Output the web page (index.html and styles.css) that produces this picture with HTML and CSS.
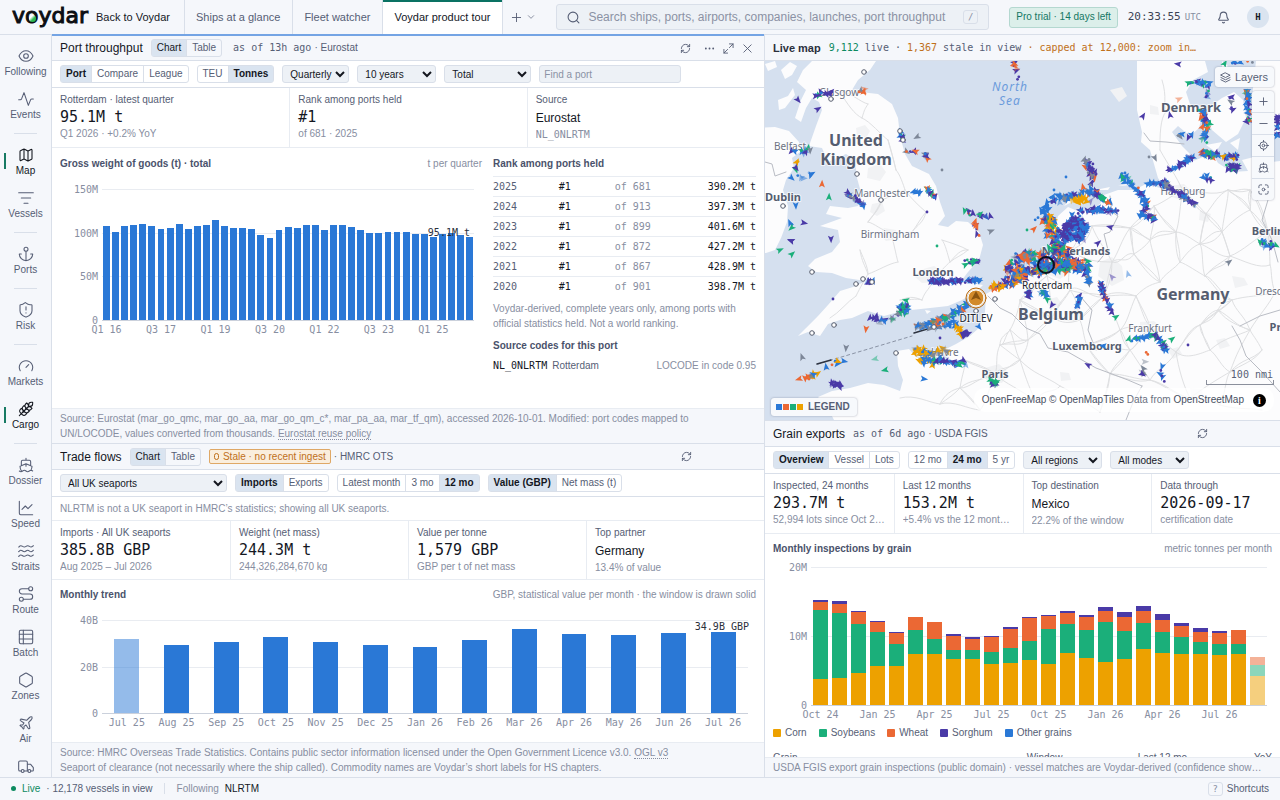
FILE: index.html
```html
<!DOCTYPE html>
<html lang="en">
<head>
<meta charset="utf-8">
<meta name="viewport" content="width=device-width, initial-scale=1">
<title>Voydar</title>
<link rel="stylesheet" href="styles.css">
</head>
<body>
<svg class="defs" aria-hidden="true">
  <symbol id="i-refresh" viewBox="0 0 24 24"><path d="M3 12a9 9 0 0 1 9-9 9.75 9.75 0 0 1 6.74 2.74L21 8M21 3v5h-5M21 12a9 9 0 0 1-9 9 9.75 9.75 0 0 1-6.74-2.74L3 16M3 21v-5h5"/></symbol>
  <symbol id="i-ship" viewBox="0 0 24 24"><path d="M12 10.2V14M12 2v3M19 13V7a2 2 0 0 0-2-2H7a2 2 0 0 0-2 2v6M19.4 20A11.6 11.6 0 0 0 21 14l-8.2-3.6a2 2 0 0 0-1.6 0L3 14a11.6 11.6 0 0 0 2.8 7.8M2 21c.6.5 1.2 1 2.5 1 2.5 0 2.5-2 5-2 1.300 0 1.900.5 2.500 1s1.200 1 2.500 1c2.500 0 2.500-2 5-2 1.300 0 1.900.5 2.500 1"/></symbol>
</svg>
<div class="app">
  <header class="topbar">
    <a class="logo" href="#">voydar<span class="logo-dot"></span></a>
    <a class="back" href="#">Back to Voydar</a>
    <nav class="tabs">
      <a class="tab" href="#">Ships at a glance</a>
      <a class="tab" href="#">Fleet watcher</a>
      <a class="tab tab-on" href="#">Voydar product tour</a>
    </nav>
    <button class="newtab" aria-label="New tab"><svg class="ic" viewBox="0 0 24 24"><path d="M3 12h18M12 3v18"/></svg><svg class="ic ic-sm" viewBox="0 0 24 24"><path d="m4 8 8 8 8-8"/></svg></button>
    <label class="search">
      <svg class="ic" viewBox="0 0 24 24"><circle cx="11" cy="11" r="9"/><path d="m22 22-4.500-4.500"/></svg>
      <input type="text" aria-label="Search" placeholder="Search ships, ports, airports, companies, launches, port throughput">
      <kbd>/</kbd>
    </label>
    <a class="trial" href="#">Pro trial · 14 days left</a>
    <span class="clock">20:33:55<small>UTC</small></span>
    <button class="bell" aria-label="Notifications"><svg class="ic" viewBox="0 0 24 24"><path d="M10.300 21a2 2 0 0 0 3.400 0M3.300 15.300A1 1 0 0 0 4 17h16a1 1 0 0 0 .7-1.700C19.400 14 18 12.500 18 8A6 6 0 0 0 6 8c0 4.500-1.400 6-2.700 7.300z"/></svg></button>
    <button class="avatar">H</button>
  </header>

  <nav class="side">
    <a href="#"><svg viewBox="0 0 24 24"><path d="M1.500 12C4 6.500 8 4 12 4s8 2.500 10.500 8C20 17.500 16 20 12 20S4 17.500 1.500 12z"/><circle cx="12" cy="12" r="3.500"/></svg>Following</a>
    <a href="#"><svg viewBox="0 0 24 24"><path d="M1 13h2.500c1 0 1.500-.5 2-1.500L9 2.500l6.500 19L19 13c.4-1 1-1 2-1h2"/></svg>Events</a>
    <hr>
    <a class="on" href="#"><svg viewBox="0 0 24 24"><path d="M14.100 5.600a2 2 0 0 0 1.800 0l3.700-1.900A1 1 0 0 1 21 4.600v12.800a1 1 0 0 1-.6.900l-4.500 2.300a2 2 0 0 1-1.800 0l-4.200-2.200a2 2 0 0 0-1.800 0l-3.700 1.900A1 1 0 0 1 3 19.400V6.600a1 1 0 0 1 .6-.9l4.500-2.300a2 2 0 0 1 1.800 0zM15 5.800v15M9 3.200v15"/></svg>Map</a>
    <a href="#"><svg viewBox="0 0 24 24"><path d="M1 4h22M5 12h14M9 20h6"/></svg>Vessels</a>
    <hr>
    <a href="#"><svg viewBox="0 0 24 24"><path d="M12 22V8M5 12H2a10 10 0 0 0 20 0h-3"/><circle cx="12" cy="5" r="3"/></svg>Ports</a>
    <hr>
    <a href="#"><svg viewBox="0 0 24 24"><path d="M21 13c0 5-3.500 7.500-8.700 9.400a1 1 0 0 1-.7 0C6.500 20.500 3 18 3 13V5a1 1 0 0 1 1-1c2 0 4.500-1.200 6.200-2.700a1.200 1.200 0 0 1 1.500 0C13.500 2.800 16 4 18 4h2a1 1 0 0 1 1 1zM12 7v5M12 16v.5"/></svg>Risk</a>
    <hr>
    <a href="#"><svg viewBox="0 0 24 24"><path d="m12 14 4-4M3.300 19a10 10 0 1 1 17.400 0"/></svg>Markets</a>
    <a class="on" href="#"><svg viewBox="0 0 24 24"><path d="M2 22 16 8M3.500 12.500 5 11l1.500 1.500a3.500 3.500 0 0 1 0 5L5 19l-1.500-1.500a3.500 3.500 0 0 1 0-5zM7.500 8.500 9 7l1.500 1.500a3.500 3.500 0 0 1 0 5L9 15l-1.500-1.500a3.500 3.500 0 0 1 0-5zM11.500 4.500 13 3l1.500 1.500a3.500 3.500 0 0 1 0 5L13 11l-1.500-1.500a3.500 3.500 0 0 1 0-5zM20 2h2v2a4 4 0 0 1-4 4h-2V6a4 4 0 0 1 4-4zM11.500 17.500 13 19l-1.500 1.500a3.500 3.500 0 0 1-5 0L5 19l1.500-1.500a3.500 3.500 0 0 1 5 0zM15.500 13.500 17 15l-1.500 1.500a3.500 3.500 0 0 1-5 0L9 15l1.500-1.500a3.500 3.500 0 0 1 5 0zM19.500 9.500 21 11l-1.500 1.500a3.500 3.500 0 0 1-5 0L13 11l1.500-1.500a3.500 3.500 0 0 1 5 0z"/></svg>Cargo</a>
    <hr>
    <a href="#"><svg><use href="#i-ship"/></svg>Dossier</a>
    <a href="#"><svg viewBox="0 0 24 24"><path d="M2 2v18a2 2 0 0 0 2 2h18M6 14l5-5 4 4 6-6"/></svg>Speed</a>
    <a href="#"><svg viewBox="0 0 24 24"><path d="M1 6c.6.500 1.200-2 3-2 3 0 3 2 5.500 2s2.500-2 5-2 3 2 5 2 2.500-1.500 3.500-2M1 13c.6.500 1.200-2 3-2 3 0 3 2 5.500 2s2.500-2 5-2 3 2 5 2 2.500-1.500 3.500-2M1 20c.6.500 1.200-2 3-2 3 0 3 2 5.500 2s2.500-2 5-2 3 2 5 2 2.500-1.500 3.500-2"/></svg>Straits</a>
    <a href="#"><svg viewBox="0 0 24 24"><circle cx="5" cy="20" r="3"/><circle cx="19" cy="4" r="3"/><path d="M8 20h10a4 4 0 0 0 0-8H6a4 4 0 0 1 0-8h10"/></svg>Route</a>
    <a href="#"><svg viewBox="0 0 24 24"><rect x="2" y="2" width="20" height="20" rx="2"/><path d="M2 8h20M8 2v20M2 15h20"/></svg>Batch</a>
    <a href="#"><svg viewBox="0 0 24 24"><path d="M21.500 16V8a2 2 0 0 0-1-1.700l-7.500-4.300a2 2 0 0 0-2 0L3.500 6.300a2 2 0 0 0-1 1.700v8a2 2 0 0 0 1 1.700L11 22a2 2 0 0 0 2 0l7.500-4.300a2 2 0 0 0 1-1.700z"/></svg>Zones</a>
    <a href="#"><svg viewBox="0 0 24 24"><path d="M17.800 19.200 16 11l3.500-3.500C21 6 21.500 4 21 3c-1-.5-3 0-4.500 1.500L13 8 4.800 6.200c-.5-.1-.9.100-1.100.5l-.3.500c-.2.500-.1 1 .3 1.300L9 12l-2 3H4l-1 1 3 2 2 3 1-1v-3l3-2 3.500 5.300c.3.400.8.500 1.300.3l.5-.2c.4-.3.600-.7.500-1.200z"/></svg>Air</a>
    <a class="last" href="#" aria-label="Road"><svg viewBox="0 0 24 24"><path d="M14 18V5a2 2 0 0 0-2-2H3a2 2 0 0 0-2 2v11a2 2 0 0 0 2 2h2M15 18H9M19 18h3a1 1 0 0 0 1-1v-4l-4-5h-5"/><circle cx="17" cy="18" r="2.200"/><circle cx="7" cy="18" r="2.200"/></svg></a>
  </nav>

  <main class="left">
    <section class="panel port">
      <header class="phead">
        <h2>Port throughput</h2>
        <div class="seg"><button class="sel">Chart</button><button>Table</button></div>
        <span class="asof">as of 13h ago</span><span class="src">· Eurostat</span>
        <div class="tools">
          <button aria-label="Refresh"><svg class="ic"><use href="#i-refresh"/></svg></button>
          <button class="more" aria-label="More"><svg class="ic" viewBox="0 0 24 24"><path stroke-width="4" d="M4 12h.1M12 12h.1M20 12h.1"/></svg></button>
          <button aria-label="Expand"><svg class="ic" viewBox="0 0 24 24"><path d="M14 2h8v8M22 2l-8 8M10 22H2v-8M2 22l8-8"/></svg></button>
          <button aria-label="Close"><svg class="ic" viewBox="0 0 24 24"><path d="m4 4 16 16M20 4 4 20"/></svg></button>
        </div>
      </header>
      <div class="bar">
        <div class="seg"><button class="sel b">Port</button><button>Compare</button><button>League</button></div>
        <div class="seg"><button>TEU</button><button class="sel b">Tonnes</button></div>
        <select class="w-s" aria-label="Period"><option>Quarterly</option></select>
        <select class="w-m" aria-label="Range"><option>10 years</option></select>
        <select class="w-l" aria-label="Cargo"><option>Total</option></select>
        <input class="find" type="text" aria-label="Find a port" placeholder="Find a port">
      </div>
      <div class="kpis">
        <div><span>Rotterdam · latest quarter</span><b>95.1M t</b><i>Q1 2026 · +0.2% YoY</i></div>
        <div><span>Rank among ports held</span><b>#1</b><i>of 681 · 2025</i></div>
        <div><span>Source</span><b class="word">Eurostat</b><i class="mono">NL_0NLRTM</i></div>
      </div>
      <div class="body split">
        <div>
          <div class="shead"><h3>Gross weight of goods (t) · total</h3><span>t per quarter</span></div>
          <div class="chart c-port">
            <div class="yax"><span>150M</span><span>100M</span><span>50M</span><span>0</span></div>
            <div class="plot" id="port-bars"><output class="tip">95.1M t</output></div>
            <div class="xax" id="port-x"></div>
          </div>
        </div>
        <div>
          <div class="shead"><h3>Rank among ports held</h3></div>
          <table class="rank">
            <tr><td>2025</td><td>#1</td><td>of 681</td><td>390.2M t</td></tr>
            <tr><td>2024</td><td>#1</td><td>of 913</td><td>397.3M t</td></tr>
            <tr><td>2023</td><td>#1</td><td>of 899</td><td>401.6M t</td></tr>
            <tr><td>2022</td><td>#1</td><td>of 872</td><td>427.2M t</td></tr>
            <tr><td>2021</td><td>#1</td><td>of 867</td><td>428.9M t</td></tr>
            <tr><td>2020</td><td>#1</td><td>of 901</td><td>398.7M t</td></tr>
          </table>
          <p class="fine">Voydar-derived, complete years only, among ports with official statistics held. Not a world ranking.</p>
          <h3 class="codes-h">Source codes for this port</h3>
          <div class="codes"><span class="mono">NL_0NLRTM</span><span>Rotterdam</span><em>LOCODE in code 0.95</em></div>
        </div>
      </div>
      <footer class="pfoot">Source: Eurostat (mar_go_qmc, mar_go_aa, mar_go_qm_c*, mar_pa_aa, mar_tf_qm), accessed 2026-10-01. Modified: port codes mapped to<br>UN/LOCODE, values converted from thousands. <a href="#">Eurostat reuse policy</a></footer>
    </section>

    <section class="panel trade">
      <header class="phead">
        <h2>Trade flows</h2>
        <div class="seg"><button class="sel">Chart</button><button>Table</button></div>
        <span class="stale"><i></i>Stale · no recent ingest</span><span class="src">· HMRC OTS</span>
        <div class="tools solo"><button aria-label="Refresh"><svg class="ic"><use href="#i-refresh"/></svg></button></div>
      </header>
      <div class="bar">
        <select class="w-xl" aria-label="Seaport"><option>All UK seaports</option></select>
        <div class="seg"><button class="sel b">Imports</button><button>Exports</button></div>
        <div class="seg"><button>Latest month</button><button>3 mo</button><button class="sel b">12 mo</button></div>
        <div class="seg"><button class="sel b">Value (GBP)</button><button>Net mass (t)</button></div>
      </div>
      <p class="note">NLRTM is not a UK seaport in HMRC’s statistics; showing all UK seaports.</p>
      <div class="kpis">
        <div><span>Imports · All UK seaports</span><b>385.8B GBP</b><i>Aug 2025 – Jul 2026</i></div>
        <div><span>Weight (net mass)</span><b>244.3M t</b><i>244,326,284,670 kg</i></div>
        <div><span>Value per tonne</span><b>1,579 GBP</b><i>GBP per t of net mass</i></div>
        <div><span>Top partner</span><b class="word">Germany</b><i>13.4% of value</i></div>
      </div>
      <div class="body">
        <div class="shead"><h3>Monthly trend</h3><span>GBP, statistical value per month · the window is drawn solid</span></div>
        <div class="chart c-trade">
          <div class="yax"><span>40B</span><span>20B</span><span>0</span></div>
          <div class="plot" id="trade-bars"><output class="tip">34.9B GBP</output></div>
          <div class="xax" id="trade-x"></div>
        </div>
      </div>
      <footer class="pfoot">Source: HMRC Overseas Trade Statistics. Contains public sector information licensed under the Open Government Licence v3.0. <a href="#">OGL v3</a><br>Seaport of clearance (not necessarily where the ship called). Commodity names are Voydar’s short labels for HS chapters.</footer>
    </section>
  </main>

  <aside class="right">
    <section class="panel mapp">
      <header class="phead">
        <h2>Live map</h2>
        <p class="live"><span class="g">9,112</span> live · <span class="o">1,367</span> stale in view <span class="o">· capped at 12,000: zoom in…</span></p>
      </header>
      <div class="map">
        <svg class="chartmap" id="map" viewBox="765 61 515 359" preserveAspectRatio="xMidYMid slice" role="img" aria-label="Vessel map">
          <rect class="sea" x="465" y="-100" width="1100" height="700"/>
          <g class="land">
            <path d="M812 61 803 70 797 82 806 90 801 100 795 118 801 122 806 108 812 98 819 102 822 110 816 126 809 146 822 148 828 162 846 154 855 160 857 178 862 196 858 206 848 208 830 206 826 214 842 218 820 226 838 230 840 242 832 252 815 259 808 266 816 272 832 273 846 278 866 281 853 287 840 291 828 305 818 316 806 328 798 336 808 332 820 336 828 324 840 320 852 318 868 311 884 316 902 311 930 308 948 306 962 300 976 292 983 285 970 283 962 280 968 272 979 260 983 245 979 232 968 222 956 221 948 227 938 225 945 216 940 202 936 186 929 174 912 166 905 154 900 136 898 118 892 104 878 94 860 92 852 90 858 80 870 70 876 61Z"/>
            <path d="M700 130 775 127 789 131 799 142 800 152 792 158 794 168 786 180 783 190 788 206 787 222 781 238 775 250 766 253 700 260Z"/>
            <path d="M781 70 790 62 797 66 792 75 785 79ZM765 64 775 61 777 67 768 71ZM778 100 788 96 793 88 795 95 785 108 779 110ZM925 310 931 311 927 314Z"/>
            <path d="M1137 0V110L1142 132 1141 142 1150 150 1154 164 1158 178 1168 192 1160 188 1146 184 1134 190 1118 190 1104 195 1100 204 1090 210 1080 212 1068 207 1058 216 1052 238 1044 258 1032 268 1016 278 1000 286 986 294 985 312 980 327 970 336 956 344 944 350 948 358 932 362 916 357 909 349 897 351 898 366 903 380 900 391 884 385 868 383 850 388 832 391 818 397 828 408 834 420 830 600H1600V0Z"/>
            <path d="M1118 186 1135 182 1133 185ZM1095 190 1110 187 1108 190ZM1064 206 1070 199 1072 202ZM1078 197 1088 194 1086 197Z"/>
          </g>
          <g class="town"><path d="M856 128l9-3 5 6-4 7-9-2zM868 168l12-4 6 8-6 9-13-3zM872 204l10-2 3 9-8 5-7-4zM884 228l12 2 2 9-12 2-6-6zM920 270l14-4 12 7-6 9-18 1-7-6zM1100 262l12-5 10 9 2 14-12 6-14-10zM1170 186l14-2 8 8-8 9-15-5zM1200 210l11 4-3 8-9-2zM1262 232l18-4v18l-15 2zM1140 322l14-1 9 8-11 7-12-5zM1168 350l10-3 4 7-9 5zM985 368l14-4 10 9-7 10-16-3zM1190 388l11 1 3 8-12 4zM1050 268l14-2 6 6-10 7-11-4zM1232 276l12 2 4 7-13 3zM1045 300l12-3 5 7-11 5zM1150 105l8 2 1 8-9-1zM1110 90l12-3 5 9-8 6zM1216 340l9-2 5 8-10 3zM1060 372l9 1 2 7-10 1z"/></g>
          <path class="sea" d="M1205 61 1208 72 1193 80 1186 92 1190 104 1203 112 1199 128 1190 136 1178 126 1172 132 1182 146 1190 154 1178 166 1196 160 1212 153 1218 163 1232 172 1248 171 1242 160 1258 156 1272 162 1290 160V61ZM1071 218 1082 215 1086 222 1078 230 1070 236 1068 228ZM1143 172 1150 176 1144 180Z"/>
          <path class="land" d="M1183 104 1196 106 1200 120 1192 130 1180 122ZM1208 108 1222 98 1234 92 1243 100 1246 118 1238 134 1226 142 1212 130 1208 118ZM1206 145 1222 142 1216 152ZM1230 143 1240 138 1238 150ZM1256 61H1290V138L1268 136 1262 118 1252 98ZM1222 61 1228 66 1222 70Z"/>
          <g class="roads" id="roads"></g>
          <path class="border" d="M765 162 772 164 775 176 786 172M1144 133 1150 141 1166 142 1184 144M1110 196 1112 212 1118 216 1110 232 1104 234 1108 250 1098 262M988 296 1000 308 1012 314 1026 328 1040 334 1048 348 1068 352 1082 360 1096 368 1112 374 1128 380 1142 386M1080 296 1092 310 1088 330 1096 350M1232 326 1240 340 1246 356 1262 372 1280 392M1142 386 1134 400 1126 420M1240 326 1260 316 1280 310M1268 200 1262 220 1272 240 1278 262"/>
          <path class="track" d="M818 364 912 336"/><path class="track2" d="M817 364 831 360M914 333 934 327"/>
          <g class="lb">
            <text class="it" x="1010" y="91">North</text><text class="it" x="1010" y="105">Sea</text>
            <text x="839" y="96">Glasgow</text><text class="big" x="856" y="146">United</text><text class="big" x="856" y="165">Kingdom</text>
            <text x="790" y="150">Belfast</text><text class="mid" x="783" y="201">Dublin</text><text x="882" y="197">Manchester</text>
            <text x="890" y="238">Birmingham</text><text class="mid" x="933" y="276">London</text>
            <text class="mid2" x="1191" y="112">Denmark</text><text x="1183" y="195">Hamburg</text><text class="mid" x="1268" y="235">Berlin</text>
            <text class="mid" x="1076" y="255">Netherlands</text><text class="big" x="1193" y="300">Germany</text><text class="big" x="1051" y="320">Belgium</text>
            <text class="mid" x="1087" y="350">Luxembourg</text><text x="1150" y="332">Frankfurt</text><text x="1275" y="295">Dresden</text><text class="mid" x="1289" y="331">Prague</text>
            <text x="938" y="356">Le Havre</text><text class="mid" x="995" y="378">Paris</text>
          </g>
          <g id="vessels"></g>
          <circle class="ring" cx="1046" cy="265" r="8"/>
          <g class="target"><circle cx="976" cy="298" r="10"/><circle class="fill" cx="976" cy="298" r="8"/><path d="m976 291 5 9-5-2-5 2z"/></g>
          <g class="lb"><text class="dk" x="1047" y="289">Rotterdam</text><text class="dk" x="976" y="322">DITLEV</text></g>
        </svg>
        <div class="mapui">
          <button class="layers"><svg class="ic" viewBox="0 0 24 24"><path d="m12 2 10 5-10 5L2 7zM2 12l10 5 10-5M2 17l10 5 10-5"/></svg>Layers</button>
          <div class="ctl">
            <button aria-label="Zoom in"><svg class="ic" viewBox="0 0 24 24"><path d="M4 12h16M12 4v16"/></svg></button>
            <button aria-label="Zoom out"><svg class="ic" viewBox="0 0 24 24"><path d="M4 12h16"/></svg></button>
            <button aria-label="Locate"><svg class="ic" viewBox="0 0 24 24"><circle cx="12" cy="12" r="8"/><circle cx="12" cy="12" r="3"/><path d="M12 1v3M12 20v3M1 12h3M20 12h3"/></svg></button>
            <button aria-label="Fleet"><svg class="ic"><use href="#i-ship"/></svg></button>
            <button aria-label="Fit view"><svg class="ic" viewBox="0 0 24 24"><path d="M2 8V5a3 3 0 0 1 3-3h3M16 2h3a3 3 0 0 1 3 3v3M22 16v3a3 3 0 0 1-3 3h-3M8 22H5a3 3 0 0 1-3-3v-3"/><circle cx="12" cy="12" r="3"/></svg></button>
          </div>
          <div class="mapfoot">
            <button class="legend"><i class="c1"></i><i class="c2"></i><i class="c3"></i><i class="c4"></i>LEGEND</button>
            <div class="attr">
              <div class="scale">100 nmi</div>
              <div class="credit"><p><a href="#">OpenFreeMap</a> <a href="#">© OpenMapTiles</a> Data from <a href="#">OpenStreetMap</a></p><button aria-label="About this map">i</button></div>
            </div>
          </div>
        </div>
      </div>
    </section>

    <section class="panel grain">
      <header class="phead">
        <h2>Grain exports</h2>
        <span class="asof">as of 6d ago</span><span class="src">· USDA FGIS</span>
        <div class="tools solo"><button aria-label="Refresh"><svg class="ic"><use href="#i-refresh"/></svg></button></div>
      </header>
      <div class="bar">
        <div class="seg"><button class="sel b">Overview</button><button>Vessel</button><button>Lots</button></div>
        <div class="seg"><button>12 mo</button><button class="sel b">24 mo</button><button>5 yr</button></div>
        <select class="w-m" aria-label="Region"><option>All regions</option></select>
        <select class="w-m" aria-label="Mode"><option>All modes</option></select>
      </div>
      <div class="kpis">
        <div><span>Inspected, 24 months</span><b>293.7M t</b><i>52,994 lots since Oct 2024</i></div>
        <div><span>Last 12 months</span><b>153.2M t</b><i>+5.4% vs the 12 months before</i></div>
        <div><span>Top destination</span><b class="word">Mexico</b><i>22.2% of the window</i></div>
        <div><span>Data through</span><b>2026-09-17</b><i>certification date</i></div>
      </div>
      <div class="body">
        <div class="shead"><h3>Monthly inspections by grain</h3><span>metric tonnes per month</span></div>
        <div class="chart c-grain">
          <div class="yax"><span>20M</span><span>10M</span><span>0</span></div>
          <div class="plot" id="grain-bars"></div>
          <div class="xax" id="grain-x"></div>
        </div>
        <ul class="key"><li><i class="c4"></i>Corn</li><li><i class="c3"></i>Soybeans</li><li><i class="c2"></i>Wheat</li><li><i class="c5"></i>Sorghum</li><li><i class="c1"></i>Other grains</li></ul>
        <table class="gt"><tr><th>Grain</th><th>Window</th><th>Last 12 mo</th><th>YoY</th></tr></table>
      </div>
      <footer class="pfoot one">USDA FGIS export grain inspections (public domain) · vessel matches are Voydar-derived (confidence shown per match)</footer>
    </section>
  </aside>

  <footer class="status">
    <span class="on-dot"></span><span class="g">Live</span><span>· 12,178 vessels in view</span>
    <span class="vr"></span><span class="mut">Following</span><a href="#">NLRTM</a>
    <button class="sc"><kbd>?</kbd>Shortcuts</button>
  </footer>
</div>
<script src="app.js"></script>
</body>
</html>
```
FILE: styles.css
```css
:root {
  --bg: #f5f7fb;
  --line: #d9dfe9;
  --line2: #e8ecf2;
  --ink: #14171f;
  --mid: #565e75;
  --mut: #878ea1;
  --sel: #dae4f0;
  --field: #edf1f6;
  --green: #0c8a5f;
  --amber: #c0701a;
  --mono: "DejaVu Sans Mono", "Liberation Mono", monospace;
}
* { box-sizing: border-box; }
html, body { margin: 0; height: 100%; }
body { font: 10px/14px "Liberation Sans", Arial, sans-serif; color: var(--mid); background: var(--bg); overflow: hidden; }
button, input, select { font: inherit; color: inherit; margin: 0; }
button { background: none; border: 0; padding: 0; }
a { color: inherit; text-decoration: none; }
h2, h3, p, ul { margin: 0; padding: 0; }
.defs { position: absolute; width: 0; height: 0; }
svg { fill: none; stroke: currentColor; stroke-width: 2; stroke-linecap: round; stroke-linejoin: round; }
.ic { width: 11px; height: 11px; display: block; }
.ic-sm { width: 8px; height: 8px; }
.mono, .asof { font-family: var(--mono); }
.g { color: var(--green); }
.o { color: var(--amber); }
.c1 { background: #2a78d6; }
.c2 { background: #eb6834; }
.c3 { background: #1baf7a; }
.c4 { background: #eda100; }
.c5 { background: #4a3aa7; }

.app { height: 100vh; display: grid; grid-template: 35px minmax(0, 1fr) 23px / 52px minmax(0, 713fr) minmax(0, 515fr); }

/* top bar */
.topbar { grid-column: 1 / -1; display: flex; align-items: center; border-bottom: 1px solid var(--line); }
.logo { position: relative; margin-left: 12px; width: 84px; font: 22px/30px "DejaVu Sans", sans-serif; color: #0c0e12; -webkit-text-stroke: 1px #0c0e12; padding-bottom: 2px; }
.logo-dot { position: absolute; left: 17px; top: 14px; width: 7px; height: 7px; border-radius: 50%; background: linear-gradient(135deg, #fff 30%, #2bb84f 60%); }
.back { font-size: 11px; color: var(--ink); margin-right: 11px; width: 77px; white-space: nowrap; }
.tabs { display: flex; align-self: stretch; }
.tab { display: flex; align-items: center; padding: 0 12px 1px 11px; font-size: 11px; border-left: 1px solid var(--line); color: var(--mid); }
.tab-on { background: #fff; color: var(--ink); border-right: 1px solid var(--line); box-shadow: inset 0 2px #0a7263; }
.newtab { display: flex; align-items: center; gap: 5px; margin: 0 21px 0 8px; }
.search { flex: 1; display: flex; align-items: center; gap: 8px; height: 26px; border: 1px solid var(--line); border-radius: 3px; background: var(--field); padding: 0 10px; margin-right: 20px; }
.search .ic { width: 13px; height: 13px; }
.search input { flex: 1; min-width: 0; border: 0; background: none; outline: 0; padding: 0; font-size: 12px; }
.search kbd { margin-left: -6px; }
input::placeholder { color: #8b92a4; opacity: 1; }
kbd { font: 9px/12px var(--mono); border: 1px solid var(--line); border-radius: 3px; width: 15px; text-align: center; color: var(--mut); }
.trial { border: 1px solid #b4d8d0; background: #dcefea; color: #147764; border-radius: 3px; padding: 2px 6px 3px; }
.clock { display: flex; gap: 4px; font: 11px/14px var(--mono); color: #3c4355; margin-left: 10px; }
.clock small { font-size: 9px; color: var(--mut); }
.bell { margin: 0 17px 0 16px; }
.bell .ic { width: 13px; height: 13px; }
.avatar { width: 22px; height: 22px; border-radius: 50%; background: var(--sel); color: var(--ink); font: bold 9px var(--mono); margin-right: 11px; }

/* navigation rail */
.side { display: flex; flex-direction: column; border-right: 1px solid var(--line); overflow: hidden; padding-top: 6px; }
.side a { position: relative; flex: none; height: 43px; display: flex; flex-direction: column; align-items: center; justify-content: center; gap: 1px; padding-top: 1px; font-size: 10px; line-height: 13px; white-space: nowrap; }
.side svg { width: 16px; height: 16px; stroke-width: 1.600; }
.side hr { flex: none; width: 23px; margin: 6px auto; border: 0; border-top: 1px solid var(--line); }
.side .last { justify-content: flex-start; padding-top: 8px; }
.side .on { color: var(--ink); }
.side .on::before { content: ""; position: absolute; left: 4px; top: 13px; width: 2px; height: 16px; background: #177a63; }

/* panels */
.left, .right { display: grid; min-height: 0; }
.left { grid-template-rows: minmax(0, 408fr) minmax(0, 334fr); border-right: 1px solid var(--line); }
.right { grid-template-rows: minmax(0, 385fr) minmax(0, 357fr); }
.panel { display: flex; flex-direction: column; min-height: 0; min-width: 0; background: #fff; }
.port { border-top: 2px solid #74a4e4; margin-top: -1px; }
.phead { flex: none; height: 26px; display: flex; align-items: center; gap: 8px; padding: 0 8px; background: var(--bg); border-bottom: 1px solid var(--line); white-space: nowrap; }
.port .phead { height: 25px; }
.grain .phead, .trade .phead { border-top: 1px solid var(--line); height: 27px; }
h2 { font-size: 12px; line-height: 14px; font-weight: 500; color: var(--ink); }
.mapp h2 { font-size: 11px; font-weight: bold; color: #2b303c; }
.asof { margin-left: 3px; margin-right: -5px; }
.grain .asof { margin-left: 0; }
.stale { display: flex; align-items: center; gap: 4px; border: 1px solid #dfa866; background: #faeedd; color: var(--amber); border-radius: 2px; padding: 0 4px; line-height: 13px; margin-right: -5px; }
.stale i { width: 5px; height: 7px; border: 1px solid; border-radius: 3px; }
.tools { margin-left: auto; display: flex; gap: 8px; padding-right: 3px; align-items: center; }
.tools .more { margin-left: 5px; }
.tools.solo { padding-right: 64px; }
.live { font: 10px/14px var(--mono); }
.bar { flex: none; height: 27px; display: flex; align-items: center; gap: 8px; padding: 0 8px; border-bottom: 1px solid var(--line); }
.seg { display: flex; border: 1px solid var(--line); border-radius: 3px; background: #fff; white-space: nowrap; }
.seg button { padding: 0 5px; height: 16px; line-height: 16px; }
.seg button + button { border-left: 1px solid var(--line); }
.seg .sel { background: var(--sel); color: var(--ink); }
.seg .b { font-weight: bold; }
.phead .seg { background: var(--bg); }
select { height: 18px; border: 1px solid var(--line); border-radius: 3px; background-color: var(--field); color: var(--ink); font-size: 10px; padding: 0 0 0 3px; }
.w-s { width: 67px; }
.w-m { width: 79px; }
.w-l { width: 87px; }
.w-xl { width: 167px; }
.find { width: 142px; height: 18px; border: 1px solid var(--line); border-radius: 3px; background: var(--field); padding: 0 4px; }
.note { flex: none; height: 23px; line-height: 23px; padding: 0 8px; color: var(--mut); }
.trade .kpis { border-top: 1px solid var(--line2); }
.kpis { flex: none; display: grid; grid-auto-flow: column; grid-auto-columns: minmax(0, 1fr); border-bottom: 1px solid var(--line2); height: 60px; }
.kpis div { display: flex; flex-direction: column; padding: 5px 8px 0; min-width: 0; white-space: nowrap; }
.kpis div + div { border-left: 1px solid var(--line2); }
.kpis span { line-height: 14px; }
.kpis b { font: 15px/20px var(--mono); color: var(--ink); }
.kpis .word { font: 12px/20px "Liberation Sans", Arial, sans-serif; padding-top: 1px; }
.kpis i { font-style: normal; line-height: 14px; color: var(--mut); overflow: hidden; text-overflow: ellipsis; }
.body { flex: 1; min-height: 0; overflow: hidden; padding: 8px 8px 0; }
.split { display: grid; grid-template-columns: minmax(0, 422fr) minmax(0, 263fr); gap: 11px; padding-top: 9px; }
.shead { display: flex; justify-content: space-between; color: var(--mut); }
h3 { font-size: 10px; line-height: 14px; font-weight: bold; color: #4a526b; }
.pfoot { flex: none; background: var(--bg); border-top: 1px solid var(--line2); padding: 2px 8px 2px; line-height: 15px; color: var(--mut); }
.pfoot a { border-bottom: 1px dotted; }
.pfoot.one { white-space: nowrap; overflow: hidden; text-overflow: ellipsis; padding-right: 13px; }

/* charts */
.chart { display: grid; grid-template-columns: 42px minmax(0, 1fr); padding-right: 8px; font: 10px/12px var(--mono); color: var(--mut); }
.c-port { padding-top: 18px; grid-template-rows: 132px 18px; --n: 3; }
.c-trade { padding-top: 18px; grid-template-rows: 94px 18px; --n: 2; }
.c-grain { padding-top: 11px; grid-template-rows: 139px 18px; --n: 2; grid-template-columns: 38px minmax(0, 1fr); padding-right: 5px; }
.yax { display: flex; flex-direction: column; justify-content: space-between; align-items: flex-end; margin: -5px 0 -6px; padding-right: 4px; }
.plot { position: relative; display: flex; border-bottom: 1px solid #cbd1dc; background: repeating-linear-gradient(#e9ecf1 0 1px, transparent 1px calc(100% / var(--n))); }
.col { flex: 1; display: flex; flex-direction: column-reverse; align-items: center; }
.col i { flex: none; width: 76%; }
.c-trade .col i { width: 50%; }
.faded { opacity: .5; }
.tip { position: absolute; right: 4px; bottom: 62%; color: #2b303c; }
.c-trade .tip { right: -1px; bottom: 86%; }
.xax { grid-column: 2; display: flex; padding-top: 3px; }
.xax span { flex: 1; width: 0; display: flex; justify-content: center; white-space: nowrap; }
.key { display: flex; gap: 12px; list-style: none; margin-top: 2px; }
.key li { display: flex; align-items: center; gap: 4px; }
.key i { width: 8px; height: 8px; border-radius: 1px; }
table { border-collapse: collapse; width: 100%; }
.gt { margin-top: 11px; }
.gt th { font-weight: 500; padding: 0; text-align: right; width: 25%; }
.gt th:first-child { text-align: left; }
.gt th:nth-child(2) { width: 33%; }
.rank { font: 10px/19px var(--mono); margin-top: 5px; }
.rank td { padding: 0; height: 20px; border-top: 1px solid var(--line2); }
.rank td:nth-child(1) { width: 25%; }
.rank td:nth-child(2), .rank td:nth-child(4) { color: var(--ink); }
.rank td:nth-child(3) { color: var(--mut); text-align: right; width: 20%; }
.rank td:nth-child(4) { text-align: right; width: 40%; }
.fine { line-height: 15px; margin: 4px 0 8px; color: var(--mut); }
.codes-h { margin-bottom: 6px; }
.codes { display: flex; gap: 5px; }
.codes .mono { color: var(--ink); }
.codes em { font-style: normal; margin-left: auto; color: var(--mut); }

/* map */
.map { flex: 1; min-height: 0; display: grid; overflow: hidden; }
.map > * { grid-area: 1 / 1; min-height: 0; min-width: 0; }
.chartmap { width: 100%; height: 100%; stroke: none; }
.sea { fill: #d5e0ef; }
.land { fill: #fcfcfd; }
.town { fill: #f1f2f4; }
.roads { fill: none; stroke: #dfe0e2; stroke-width: 1; }
.border { stroke: #b9bcc4; stroke-width: 1; }
.track { stroke: #8a93a5; stroke-width: 1; stroke-dasharray: 3 3; }
.track2 { stroke: #2d3340; stroke-width: 1.500; }
.lb { font-family: "Noto Sans", sans-serif; font-size: 10px; fill: #6c7283; text-anchor: middle; paint-order: stroke; stroke: #ffffffb0; stroke-width: 2; }
.lb .it { font-style: italic; font-size: 12px; fill: #6b9bdc; stroke: none; letter-spacing: 1px; }
.lb .big { font-size: 16px; font-weight: bold; fill: #555d70; }
.lb .mid2 { font-size: 13px; font-weight: bold; fill: #555d70; }
.lb .mid { font-size: 11px; font-weight: bold; fill: #555d70; }
.lb .dk { font-size: 10px; fill: #20242d; }
.ring { stroke: #0d1220; stroke-width: 2; }
.target circle { stroke: #b8690f; stroke-width: 1; fill: #f6e6cfb0; }
.target .fill { fill: #d28a2b; stroke: #fff; }
.target path { fill: #8a5410; }
.dot { fill: #fff; stroke: #5a6070; stroke-width: 1; }
.mapui { z-index: 1; display: flex; flex-direction: column; align-items: flex-end; gap: 4px; padding: 6px 6px 4px; }
.layers, .ctl, .legend { background: #f7f9fc; border-radius: 3px; box-shadow: 0 0 2px #4a526b80; }
.layers { display: flex; align-items: center; gap: 4px; height: 20px; padding: 0 6px 0 5px; font-size: 11px; }
.ctl { display: flex; flex-direction: column; width: 22px; }
.ctl button { height: 21px; display: grid; place-items: center; }
.ctl button + button { border-top: 1px solid var(--line); height: 22px; }
.mapfoot { margin-top: auto; align-self: stretch; display: flex; justify-content: space-between; align-items: flex-end; }
.legend { display: flex; align-items: center; gap: 1px; height: 18px; padding: 0 7px 0 5px; font-weight: bold; }
.legend i { width: 6px; height: 6px; }
.legend .c4 { margin-right: 4px; }
.attr { display: flex; flex-direction: column; align-items: flex-end; gap: 3px; }
.scale { width: 68px; height: 16px; text-align: right; font: 10px/10px var(--mono); border: 1px solid; border-image: linear-gradient(transparent 70%, #8b909c 70%) 1; }
.credit { display: flex; align-items: center; gap: 9px; background: #ffffffc0; border-radius: 10px; padding: 2px 8px; margin-bottom: 4px; line-height: 20px; color: #6a7080; }
.credit a { color: #474e60; }
.credit button { width: 13px; height: 13px; border-radius: 50%; background: #000; color: #fff; font: bold 10px/13px "Liberation Serif", serif; }

/* status bar */
.status { grid-column: 1 / -1; display: flex; align-items: center; gap: 6px; padding: 0 11px 1px; border-top: 1px solid var(--line); }
.on-dot { width: 5px; height: 5px; border-radius: 50%; background: var(--green); }
.vr { width: 1px; height: 11px; background: var(--line); margin: 0 6px 0 5px; }
.mut { color: var(--mut); }
.status a { color: var(--ink); }
.sc { margin-left: auto; display: flex; align-items: center; gap: 4px; }
```
FILE: app.js
```js
const $ = (id) => document.getElementById(id);

function addBars(id, rows, base, span) {
  rows.forEach((row) => {
    const col = document.createElement('div');
    col.className = 'col' + (row.faded ? ' faded' : '');
    let from = base;
    row.tops.forEach((top, i) => {
      const bar = document.createElement('i');
      bar.className = row.cls[i];
      bar.style.height = ((from - top) / span * 100).toFixed(2) + '%';
      col.append(bar);
      from = top;
    });
    $(id).append(col);
  });
}
function addLabels(id, count, labels) {
  for (let i = 0; i < count; i++) {
    const s = document.createElement('span');
    s.textContent = labels[i] || '';
    $(id).append(s);
  }
}

const port = [676,693,675,673,670,675,684,682,669,685,675,672,657,675,683,681,685,702,711,687,678,681,672,672,687,672,674,678,689,697,697,695,695,695,699,699,709,700,698,702,709];
addBars('port-bars', port.map((t) => ({ tops: [t], cls: ['c1'] })), 957, 392);
addLabels('port-x', 41, { 0: 'Q1 16', 6: 'Q3 17', 12: 'Q1 19', 18: 'Q3 20', 24: 'Q1 22', 30: 'Q3 23', 36: 'Q1 25' });

const trade = [357,375,366,352,365,376,380,359,328,342,346,340,336];
addBars('trade-bars', trade.map((t, i) => ({ tops: [t], cls: ['c1'], faded: i === 0 })), 580, 280);
addLabels('trade-x', 13, 'Jul 25,Aug 25,Sep 25,Oct 25,Nov 25,Dec 25,Jan 26,Feb 26,Mar 26,Apr 26,May 26,Jun 26,Jul 26'.split(','));

const grain = [[777,569,543,538],[773,576,551,540],[757,610,575,570],[736,635,604,602],[738,671,636,634],[701,627,588],[702,655,605,603],[716,689,646,641],[717,689,654,649],[732,696,648,646],[728,684,624,620],[720,660,593,589],[732,624,585,582],[699,611,576,571],[712,629,590,584],[724,604,572,559],[717,630,588,573],[686,606,570,555],[697,635,597,580],[702,649,615,606],[702,664,633,622],[705,670,636,630],[702,671,629,627],[768,734,711]];
addBars('grain-bars', grain.map((t, i) => ({ tops: t, cls: ['c4', 'c3', 'c2', 'c5'], faded: i === 23 })), 854, 415);
addLabels('grain-x', 24, { 0: 'Oct 24', 3: 'Jan 25', 6: 'Apr 25', 9: 'Jul 25', 12: 'Oct 25', 15: 'Jan 26', 18: 'Apr 26', 21: 'Jul 26' });

/* Map: roads and vessels */
let seed = 11;
const rnd = () => (seed = (seed * 16807) % 2147483647) / 2147483647;
const gauss = () => (rnd() + rnd() + rnd()) / 1.5 - 1;

const cities = [[1047,276],[1020,300],[1070,290],[1052,318],[1028,340],[995,374],[1087,346],[1104,296],[1112,262],[1150,326],[1136,296],[1183,191],[1154,206],[1130,228],[1176,232],[1206,214],[1268,232],[1230,256],[1205,276],[1180,262],[1160,282],[1232,300],[1275,292],[1200,325],[1176,352],[1150,380],[1190,398],[1230,372],[1262,350],[1110,374],[1060,386],[1036,402],[960,388],[940,404],[900,398],[1000,345],[965,360],[1092,226],[1072,250],[1250,190],[1160,150],[1166,112],[1162,80],[1262,410],[1100,412],[1134,254],[1150,240],[1200,244],[1250,210],[1222,232],[1218,310],[1130,350],[1210,350],[1250,330],[1080,320],[1020,360],[980,410],[1010,330],[1220,405],[1120,330],[1270,265],[1228,190]];
const uk = [[933,280],[890,232],[882,200],[905,190],[912,232],[898,262],[868,274],[856,296],[830,318],[900,300],[922,300],[950,262],[968,250],[926,212],[896,170],[888,140],[862,118],[840,92],[868,104],[852,166],[868,222],[860,250],[942,240],[962,290],[770,200],[780,150]];
let roads = '';
[[cities, 4, 6], [uk, 2, 4]].forEach(([set, links, bend]) => {
  set.forEach(([x, y], i) => {
    set.map(([a, b], j) => [Math.hypot(a - x, b - y), a, b, j])
      .sort((p, q) => p[0] - q[0]).slice(1, 1 + links)
      .forEach(([d, a, b, j]) => {
        if (d > 50 || (j < i && rnd() < 0.5)) return;
        const w = () => (gauss() * bend).toFixed(1) * 1;
        const dx = (a - x) / 3, dy = (b - y) / 3;
        roads += `M${x} ${y}C${x + dx + w()} ${y + dy + w() * 2} ${x + 2 * dx + w()} ${y + 2 * dy + w() * 2} ${a} ${b}`;
      });
  });
});
$('roads').innerHTML = `<path d="${roads}"/>`;

const B = '#2a78d6', O = '#eb6834', G = '#1baf7a', Y = '#eda100', P = '#4a3aa7', S = '#7d8798';
const mix = [B, B, B, B, P, P, P, O, G, S];
const deep = [P, P, P, P, B, B, B, O, G];
const lanes = [
  [[[815,95],[822,93]], 3, 7, deep], [[[858,93],[866,89]], 2, 5, [O, S]], [[[826,94],[850,92]], 2, 4, [P]],
  [[[900,132],[903,141]], 2, 7, deep], [[[905,152],[922,153],[934,163]], 2, 14, [P, P, B, B, O, S]],
  [[[790,152],[815,150]], 3, 13, [B, B, G, O, P, S]], [[[797,158],[799,170]], 3, 4, [G, Y, P]], [[[788,178],[815,173]], 3, 6, [B, B, S]],
  [[[845,194],[855,197],[865,206]], 3, 20, [P, P, B, S]], [[[912,192],[920,192]], 2, 6, [B]], [[[927,189],[936,198]], 2, 10, deep],
  [[[965,208],[972,215],[990,217]], 3, 11, deep], [[[974,222],[980,236]], 2, 7, [O, P]],
  [[[787,205],[797,208],[790,225],[789,245]], 4, 6, [B, G, P, B]],
  [[[1014,61],[1018,82]], 2, 7, [P, P, O]],
  [[[1087,161],[1093,175],[1092,197]], 5, 34, [P, P, P, B, P, S, O]],
  [[[1035,220],[1052,200],[1070,196],[1094,191]], 4, 60, [B, B, B, B, P, S]], [[[1072,200],[1088,201]], 3, 20, [Y]],
  [[[1094,192],[1108,203]], 3, 18, mix], [[[1080,212],[1095,210],[1118,210]], 3, 38, [P, P, B, B]],
  [[[1121,176],[1132,184]], 4, 18, [B, B, G]], [[[1132,184],[1146,200],[1146,213]], 3, 28, deep], [[[1140,214],[1156,219]], 3, 20, deep],
  [[[1150,184],[1165,183]], 3, 20, [B, P, B]], [[[1165,184],[1178,193],[1195,204]], 2, 44, [P, P, P, B, S]],
  [[[1046,218],[1052,228],[1058,246]], 7, 60, [Y, O, P, B, G]], [[[1060,240],[1078,218]], 7, 120, [P, P, P, B]],
  [[[1075,240],[1086,226]], 6, 55, [B, B, P]], [[[1058,246],[1062,258]], 9, 80, [P, P, B, B, O, G]],
  [[[1012,262],[1030,256],[1046,258]], 7, 70, [B, O, P, O, S, G]], [[[1008,276],[1030,272],[1050,266]], 8, 120, [B, P, O, P, B, Y]],
  [[[1040,266],[1065,264],[1086,268]], 8, 140, [B, B, B, P, O, G]], [[[990,287],[1020,283]], 3, 36, [B, B, P, O, Y]],
  [[[1088,272],[1089,286]], 2, 12, [B, S]], [[[1028,290],[1030,297]], 2, 12, deep], [[[1043,292],[1047,297]], 3, 12, [B, G, S]], [[[1080,296],[1077,308]], 2, 14, [B, B, P]],
  [[[1101,283],[1104,296],[1112,312]], 2, 26, [P, O, B, P]],
  [[[929,281],[960,281]], 2, 48, [P, P, P, B]], [[[960,281],[982,281]], 2, 16, [B, B, P]], [[[965,262],[978,262]], 3, 13, [P, B, G]],
  [[[975,294],[962,309],[945,318],[925,325]], 3, 62, [B, B, B, B, G, O, S]], [[[955,324],[935,327],[915,326]], 3, 40, [B, B, O, S]],
  [[[905,303],[902,313]], 5, 30, [P, P, G, B]], [[[870,318],[886,320],[905,318]], 5, 13, mix],
  [[[957,325],[962,336]], 2, 10, [Y]], [[[963,334],[967,334]], 2, 10, [P]],
  [[[912,349],[930,354],[946,349]], 4, 32, [Y, Y, B, S]], [[[920,360],[932,362]], 4, 18, [Y, B]], [[[936,361],[964,363]], 3, 38, [P, B, B, P, G]],
  [[[805,380],[825,368],[847,358]], 2, 16, [B, B, O, Y]], [[[832,384],[840,385]], 2, 12, [P]],
  [[[991,381],[996,384]], 2, 14, [G, G, P]], [[[1128,340],[1155,335],[1166,350]], 2, 34, [P, B, G, B]],
  [[[1140,378],[1144,372],[1146,352]], 2, 7, [P, O, S]], [[[1161,366],[1164,385]], 2, 6, [P, B]],
  [[[1260,242],[1275,246]], 4, 20, [P, G, B]], [[[1188,84],[1210,82],[1204,100]], 4, 22, [B, B, G, P]],
  [[[1200,108],[1207,122],[1205,140]], 4, 34, [B, P, O, G]], [[[1170,170],[1184,162],[1192,157]], 2, 28, [B, P, B]],
  [[[1200,152],[1216,156]], 4, 34, [B, P, O, G]], [[[1222,158],[1240,157]], 3, 16, [B, P, Y]], [[[1228,166],[1236,168]], 3, 24, [P, P, G]],
  [[[1247,90],[1249,122]], 2, 34, [B, B, P, O, G]], [[[1225,63],[1252,62]], 2, 7, mix], [[[1205,178],[1220,180]], 4, 7, mix],
  [[[1277,115],[1278,138]], 2, 12, [P, P, B]], [[[1170,133],[1196,137]], 3, 6, [B, P, S]], [[[1230,95],[1233,112]], 2, 6, [P, S]],
  [[[866,283],[872,281]], 2, 6, [P, B]],
];
let out = '';
function mark(x, y, fill) {
  x = +x.toFixed(1); y = +y.toFixed(1);
  if (rnd() < 0.3) out += `<circle cx="${x}" cy="${y}" r="1.4" fill="${fill}"/>`;
  else out += `<path d="M0-4.200 3 3.400 0 1.800-3 3.400Z" fill="${fill}" opacity="${rnd() < 0.12 ? 0.5 : 1}" transform="translate(${x} ${y}) rotate(${rnd() * 360 | 0})"/>`;
}
lanes.forEach(([pts, spread, n, cols]) => {
  for (let i = 0; i < n; i++) {
    const t = rnd() * (pts.length - 1), k = Math.floor(t), f = t - k;
    const x = pts[k][0] + (pts[k + 1][0] - pts[k][0]) * f + gauss() * spread * 1.3;
    const y = pts[k][1] + (pts[k + 1][1] - pts[k][1]) * f + gauss() * spread * 1.3;
    mark(x, y, cols[rnd() * cols.length | 0]);
  }
});
[[804,223,P],[831,239,P],[927,212,P],[937,246,G],[818,109,P],[917,137,S],[942,170,S],[833,299,P],[822,184,O],[829,197,G],[866,329,O],[870,318,P],[846,348,S],[802,357,S],[875,359,G],[885,370,G],[924,379,B],[811,376,B],[809,379,O],[799,379,O],[1052,305,P],[1112,277,P],[1128,274,B],[1229,262,S],[1116,317,G],[1188,345,P],[1172,339,G],[1088,365,P],[1103,346,B],[1125,173,B],[1066,177,B],[1083,187,O],[1054,190,B],[1143,116,P],[1178,64,P],[1155,158,S],[1149,157,S],[940,338,P],[979,327,B],[798,100,P],[1027,230,G],[1034,229,O],[991,231,S],[780,250,G],[792,254,G],[1110,227,P],[1098,243,P],[1179,99,O],[1170,115,P]].forEach(([x, y, c]) => mark(x, y, c));
[[864,72],[831,99],[903,140],[857,174],[881,200],[783,206],[812,272],[856,284],[863,279],[872,282],[834,325],[812,333],[896,353],[995,299],[976,311],[934,327],[900,131]].forEach(([x, y]) => {
  out += `<circle class="dot" cx="${x}" cy="${y}" r="2.300"/>`;
});
$('vessels').innerHTML = out;
```
